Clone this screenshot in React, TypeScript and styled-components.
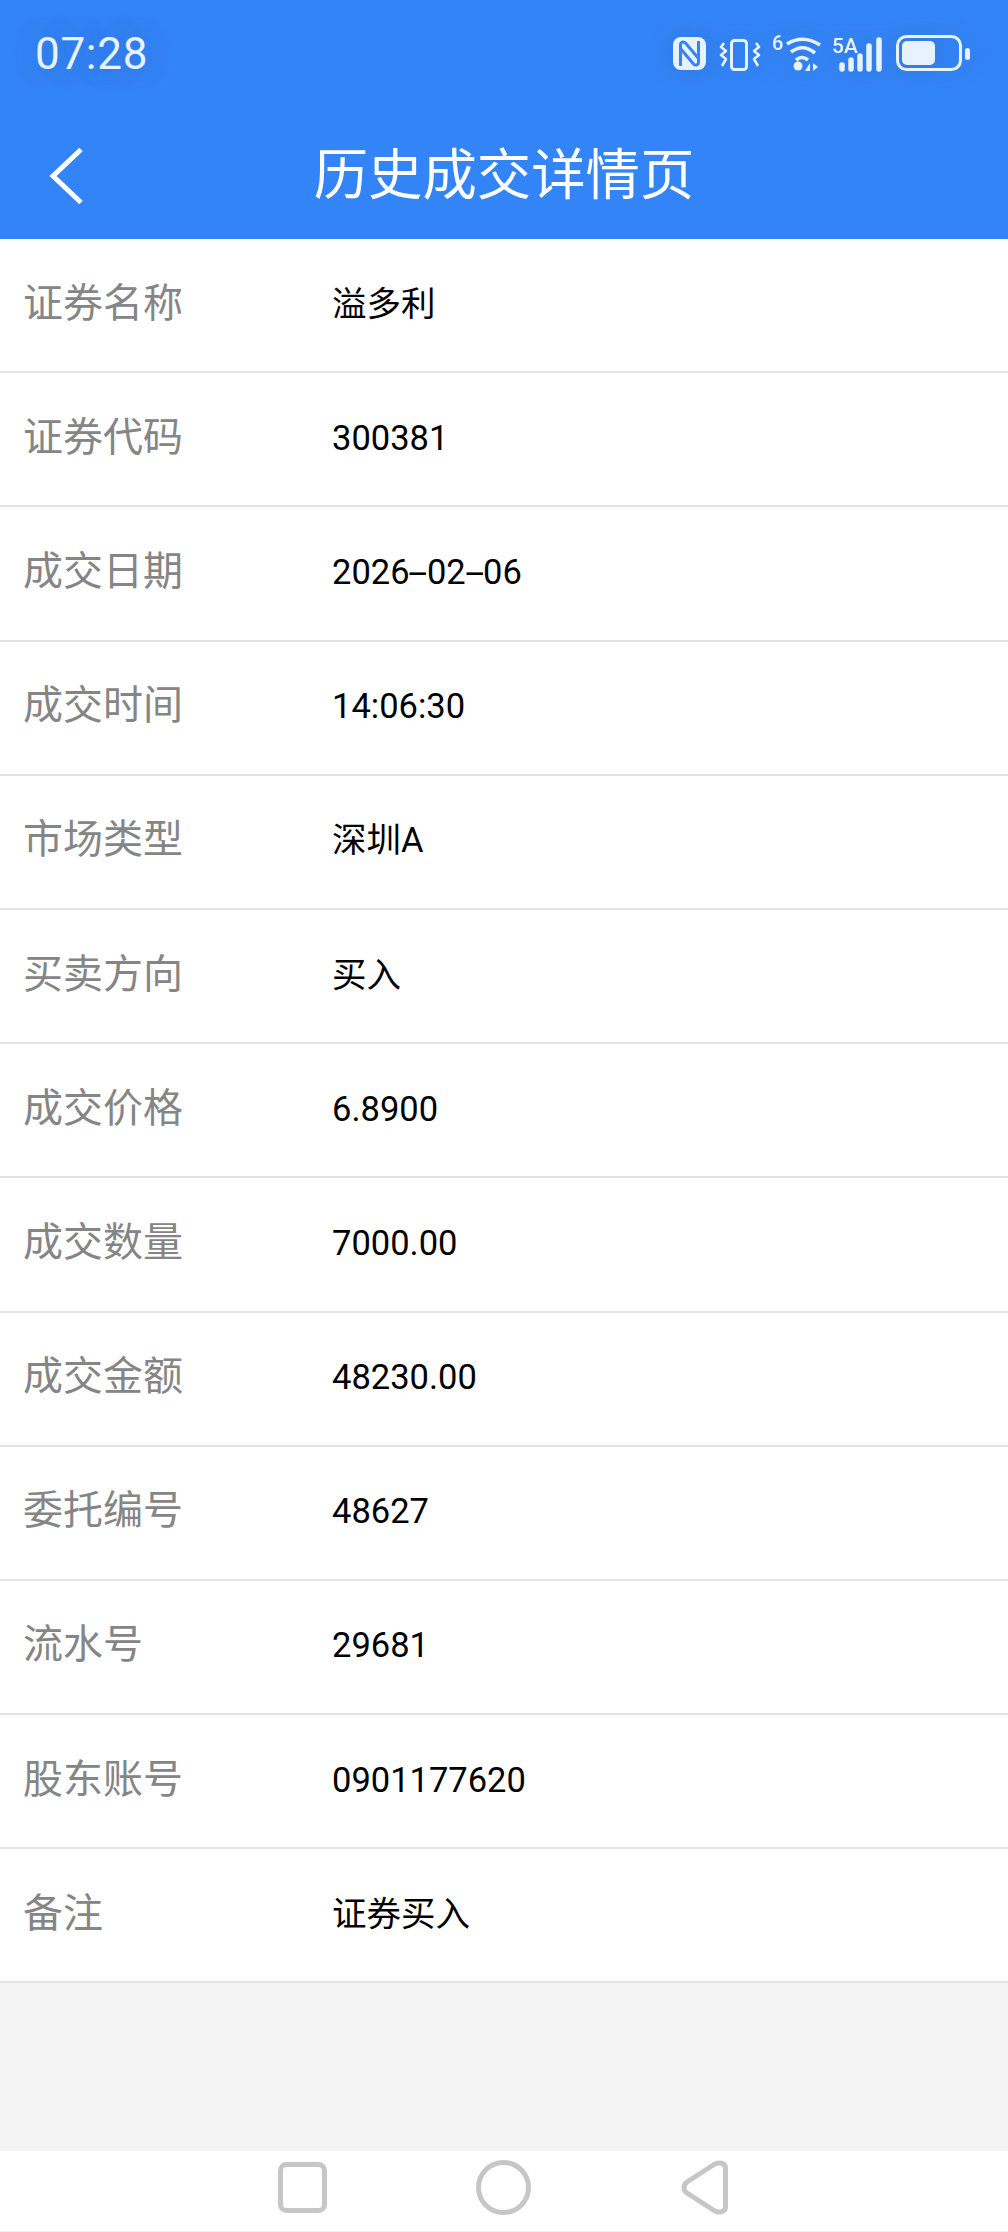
import React from 'react';
import styled, { createGlobalStyle } from 'styled-components';

const Global = createGlobalStyle`
  html, body { margin: 0; padding: 0; background: #f4f4f4; }
  * { box-sizing: border-box; }
`;
const FONT = `Roboto, "Noto Sans CJK SC", sans-serif`;

const Page = styled.div`
  width: 1008px; height: 2232px; display: flex; flex-direction: column;
  background: #f4f4f4; font-family: ${FONT}; overflow: hidden;
`;
const Header = styled.header`
  height: 239px; flex: none; background: #3384f6; display: flex; flex-direction: column;
`;
const StatusBar = styled.div`
  height: 100px; flex: none; display: flex; align-items: center; justify-content: space-between;
  padding: 8px 38px 0 35px;
`;
const Time = styled.span`
  font-size: 44px; line-height: 52px; color: #e8f2ff; letter-spacing: 0.7px;
  text-shadow: 0 0 26px rgba(40, 80, 150, 0.45);
`;
const StatusIcons = styled.div`
  display: flex; align-items: center; height: 46px;
  filter: drop-shadow(0 0 10px rgba(40, 80, 150, 0.25));
`;
const StatusIcon = styled.svg<{ $ml: number }>`
  display: block; flex: none; margin-left: ${p => p.$ml}px; color: #e8f2ff;
`;
const NavBar = styled.div`
  flex: 1; display: grid; grid-template-columns: 1fr auto 1fr; align-items: center; padding-top: 13px;
`;
const BackIcon = styled.svg`
  display: block; margin-left: 47px;
`;
const Title = styled.h1`
  margin: 0; font-size: 54.4px; line-height: 70px; font-weight: 400; color: #fff;
`;
const List = styled.div`
  background: #fff; flex: none; display: flex; flex-direction: column;
`;
const Row = styled.div`
  height: 134.2px; flex: none; display: flex; align-items: center; border-bottom: 2px solid #e3e3e3;
  padding: 0 0 3px 23px;
`;
const Label = styled.span`
  width: 309px; flex: none; font-size: 40px; line-height: 50px; color: #858585;
`;
const Value = styled.span`
  font-size: 34.5px; line-height: 44px; color: #000;
`;
const Dash = styled.span`
  display: inline-block; margin: 0 3.9px; transform: scaleX(2);
`;
const Spacer = styled.div`flex: 1;`;
const BottomNav = styled.nav`
  height: 81px; flex: none; background: #fff; border-bottom: 1px solid #f0f0f0;
  display: flex; align-items: center; justify-content: center; padding: 0 2px 8px 0;
`;
const NavIcon = styled.svg<{ $ml: number }>`
  display: block; flex: none; margin-left: ${p => p.$ml}px;
`;

const rows: [string, string][] = [
  ['证券名称', '溢多利'], ['证券代码', '300381'], ['成交日期', '2026-02-06'], ['成交时间', '14:06:30'],
  ['市场类型', '深圳A'], ['买卖方向', '买入'], ['成交价格', '6.8900'], ['成交数量', '7000.00'],
  ['成交金额', '48230.00'], ['委托编号', '48627'], ['流水号', '29681'], ['股东账号', '0901177620'], ['备注', '证券买入'],
];

const withDashes = (v: string) =>
  v.split('-').map((part, i) => (
    <React.Fragment key={i}>
      {i > 0 && <Dash>-</Dash>}
      {part}
    </React.Fragment>
  ));

export default function App() {
  return (
    <Page>
      <Global />
      <Header>
        <StatusBar>
          <Time>07:28</Time>
          <StatusIcons>
            <StatusIcon $ml={0} width="33" height="38" viewBox="0 0 33 38">
              <rect x="0" y="2" width="33" height="33" rx="8" fill="currentColor" />
              <path d="M7.500 31V10c0-3 3-4 5-2L26 24M25.500 6v21c0 3-3 4-5 2L7 13" fill="none" stroke="#3384f6" strokeWidth="3" />
            </StatusIcon>
            <StatusIcon $ml={13} width="42" height="38" viewBox="0 0 42 38" fill="none" stroke="currentColor">
              <rect x="12.500" y="5.500" width="15" height="29" rx="3" strokeWidth="3" />
              <path d="M5 8 2 12l5 4-5 4 5 4-4 7M37 8l3 4-5 4 5 4-5 4 4 7" strokeWidth="2.600" strokeLinejoin="round" />
            </StatusIcon>
            <StatusIcon $ml={11} width="50" height="46" viewBox="0 -4 50 46" fill="none" stroke="currentColor">
              <text x="0" y="15" fontSize="20" fontWeight="500" fill="currentColor" stroke="none" fontFamily="Roboto">6</text>
              <path d="M15 9Q31-1 48 10M19 17Q31 8 43 18M24 25Q30 20 36 25" strokeWidth="3.600" />
              <circle cx="26" cy="31" r="4.500" fill="currentColor" stroke="none" />
              <path d="M38 28v8h-5ZM41 28v8l5-4Z" fill="currentColor" stroke="none" />
            </StatusIcon>
            <StatusIcon $ml={10} width="50" height="46" viewBox="0 -4 50 46" fill="none" stroke="currentColor" strokeLinecap="round">
              <text x="0" y="18" fontSize="21" fontWeight="500" fill="currentColor" stroke="none" fontFamily="Roboto">5A</text>
              <path d="M10 30v4M19 25v9M28 21v13M37 11v23M47 5v29" strokeWidth="5.500" />
            </StatusIcon>
            <StatusIcon $ml={14} width="74" height="38" viewBox="0 0 74 38" fill="none">
              <rect x="1.500" y="1.500" width="63" height="33" rx="9" stroke="currentColor" strokeWidth="3" />
              <rect x="6" y="6" width="33" height="24" rx="5" fill="currentColor" />
              <rect x="69" y="13" width="5" height="12" rx="2.500" fill="currentColor" />
            </StatusIcon>
          </StatusIcons>
        </StatusBar>
        <NavBar>
          <BackIcon width="38" height="58" viewBox="0 0 38 58" fill="none">
            <path d="M34 2.500 6 29l28 26.500" stroke="#fff" strokeWidth="5" />
          </BackIcon>
          <Title>历史成交详情页</Title>
        </NavBar>
      </Header>
      <List>
        {rows.map(([l, v]) => (
          <Row key={l}>
            <Label>{l}</Label>
            <Value>{withDashes(v)}</Value>
          </Row>
        ))}
      </List>
      <Spacer />
      <BottomNav>
        <NavIcon $ml={0} width="49" height="51" viewBox="0 0 49 51" fill="none" stroke="#c6c6c6" strokeWidth="5">
          <rect x="2.500" y="2.500" width="44" height="46" rx="6" />
        </NavIcon>
        <NavIcon $ml={149} width="55" height="55" viewBox="0 0 55 55" fill="none" stroke="#c6c6c6" strokeWidth="5">
          <circle cx="27.500" cy="27.500" r="25" />
        </NavIcon>
        <NavIcon $ml={150} width="47" height="55" viewBox="0 0 47 55" fill="none" stroke="#c6c6c6" strokeWidth="5">
          <path d="M6 22 33 4.500C38 1.500 44.500 3 44.500 8v39c0 5-6.500 6.500-11.500 3.500L6 33c-4-3-4-8 0-11Z" />
        </NavIcon>
      </BottomNav>
    </Page>
  );
}
